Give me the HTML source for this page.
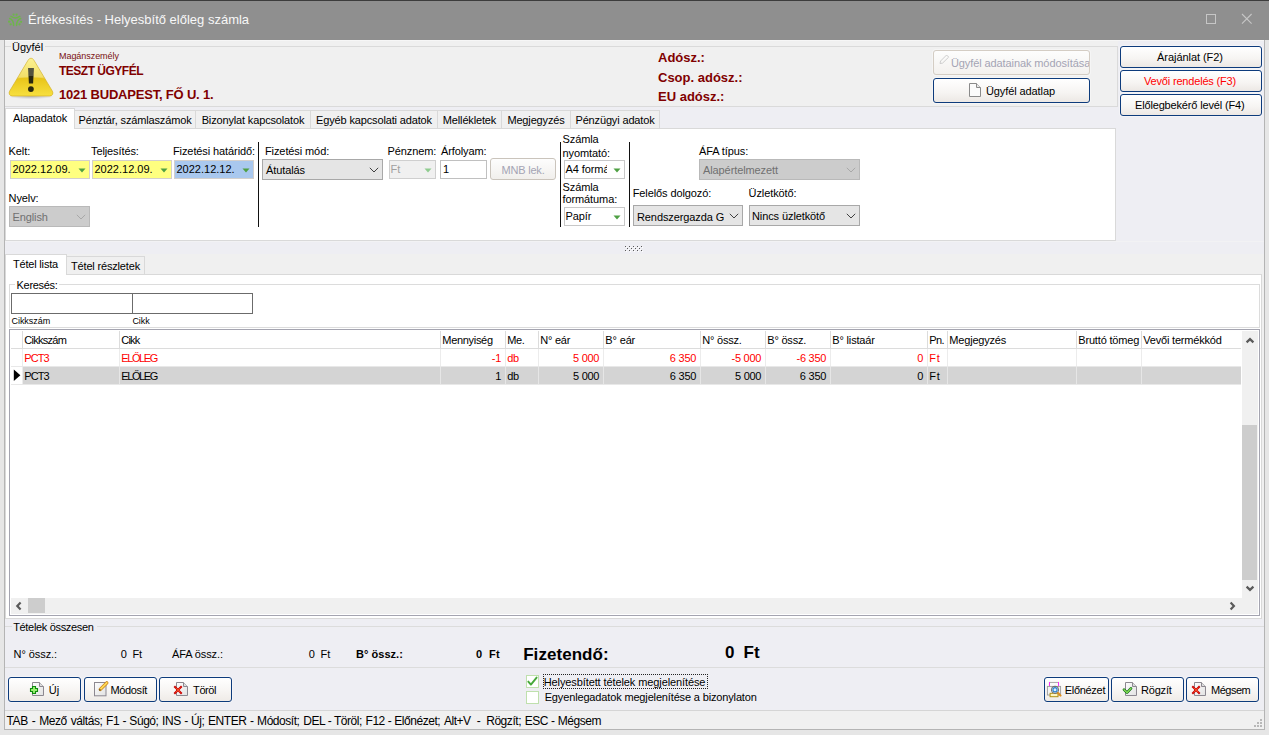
<!DOCTYPE html>
<html><head><meta charset="utf-8"><style>
html,body{margin:0;padding:0;width:1269px;height:735px;overflow:hidden;background:#e6e6e6}
.t{position:absolute;white-space:nowrap;line-height:1;font-family:'Liberation Sans', sans-serif}
.r{position:absolute;box-sizing:border-box}
svg{position:absolute}
</style></head><body>
<div class="r" style="left:0px;top:0px;width:1269px;height:735px;background:#e6e6e6"></div>
<div class="r" style="left:4px;top:40px;width:1261px;height:690px;background:#b4b4b4"></div>
<div class="r" style="left:5px;top:40px;width:1259px;height:689px;background:#f0f0f0"></div>
<div class="r" style="left:0px;top:0px;width:1269px;height:40px;background:#8f8f8f"></div>
<div class="r" style="left:0px;top:0px;width:1269px;height:1px;background:#3c3c3c"></div>
<svg style="left:0;top:0" width="30" height="40" viewBox="0 0 30 40">
<g fill="#6db649"><circle cx="13.6" cy="14.6" r="1.1"/><circle cx="16.6" cy="14.6" r="1.1"/>
<circle cx="9.1" cy="21.7" r="1.1"/><circle cx="10.6" cy="24.3" r="1.1"/><circle cx="21.1" cy="21.8" r="1.1"/><circle cx="19.5" cy="24.3" r="1.1"/></g>
<g fill="none" stroke="#6db649" stroke-width="1.45" stroke-linecap="round">
<path d="M11 16.3 Q15.2 19.6 19.8 16.3"/>
<path d="M9.6 18.5 Q13.6 19.8 13.6 25.4"/>
<path d="M20.8 18.5 Q16.6 19.8 16.6 25.4"/>
</g></svg>
<div class="t" style="left:28px;top:13px;font-size:13px;color:#f7f7f7;">Értékesítés - Helyesbítő előleg számla</div>
<div class="r" style="left:1206px;top:14px;width:10px;height:10px;border:1px solid #c6c6c6"></div>
<svg style="left:1240px;top:12px" width="14" height="14" viewBox="0 0 14 14"><path d="M2 2 L11.6 11.6 M11.6 2 L2 11.6" stroke="#c6c6c6" stroke-width="1.1"/></svg>
<div class="r" style="left:5px;top:40px;width:1259px;height:1px;background:#f6f6f6"></div>
<div class="r" style="left:1118px;top:41px;width:146px;height:87px;background:#eeeef3"></div>
<div class="r" style="left:5px;top:107px;width:1259px;height:147px;background:#eeeef3"></div>
<div class="r" style="left:5px;top:46px;width:1113px;height:61px;border:1px solid #dadada;border-left:none"></div>
<div class="r" style="left:11px;top:42px;width:34px;height:10px;background:#f0f0f0"></div>
<div class="t" style="left:12px;top:42px;font-size:11px;color:#000;">Ügyfél</div>
<svg style="left:6px;top:56px" width="50" height="45" viewBox="0 0 50 45">
<defs><linearGradient id="wg" x1="0" y1="0" x2="0" y2="1">
<stop offset="0" stop-color="#fbef7a"/><stop offset="0.5" stop-color="#f0d848"/><stop offset="0.52" stop-color="#e8c418"/><stop offset="1" stop-color="#f7e040"/></linearGradient>
<radialGradient id="ws" cx="0.5" cy="0.5" r="0.5"><stop offset="0" stop-color="#000" stop-opacity="0.22"/><stop offset="1" stop-color="#000" stop-opacity="0"/></radialGradient></defs>
<ellipse cx="25" cy="40.6" rx="23" ry="2.6" fill="url(#ws)"/>
<path d="M25 2.3 C26.4 2.3 27.2 3.1 28 4.4 L46.4 35.2 C47.5 37.2 46.6 40 43.8 40 L6.2 40 C3.4 40 2.5 37.2 3.6 35.2 L22 4.4 C22.8 3.1 23.6 2.3 25 2.3 Z" fill="url(#wg)" stroke="#d4b020" stroke-width="0.7"/>
<path d="M11.5 22.6 Q25 19.6 38.5 22.6 L28 4.4 C27.2 3.1 26.4 2.3 25 2.3 C23.6 2.3 22.8 3.1 22 4.4 Z" fill="#fff" opacity="0.18"/>
<path d="M22.1 12 L27.9 12 L27.1 27.6 L22.9 27.6 Z" fill="#2a2810"/>
<path d="M22.1 12 L27.9 12 L27.5 20 L22.5 20 Z" fill="#fff" opacity="0.2"/>
<circle cx="24.9" cy="33.1" r="2.9" fill="#2a2810"/>
</svg>
<div class="t" style="left:59px;top:52px;font-size:9px;color:#7a1010;letter-spacing:-0.05px;">Magánszemély</div>
<div class="t" style="left:59px;top:65px;font-size:12px;color:#800000;font-weight:bold;letter-spacing:-0.5px;">TESZT ÜGYFÉL</div>
<div class="t" style="left:59px;top:88px;font-size:13px;color:#800000;font-weight:bold;letter-spacing:-0.2px;">1021 BUDAPEST, FŐ U. 1.</div>
<div class="t" style="left:658px;top:51px;font-size:13px;color:#800000;font-weight:bold;">Adósz.:</div>
<div class="t" style="left:658px;top:71px;font-size:13px;color:#800000;font-weight:bold;">Csop. adósz.:</div>
<div class="t" style="left:658px;top:90px;font-size:13px;color:#800000;font-weight:bold;">EU adósz.:</div>
<div class="r" style="left:933px;top:50px;width:157px;height:25px;border:1px solid #d4cdc4;border-radius:3px;background:linear-gradient(#fdfdfd,#f3f1ee);box-shadow:0 0 0 1px rgba(255,255,255,0.35)"></div>
<svg style="left:937px;top:53px" width="14" height="14" viewBox="0 0 14 14">
<path d="M3 10.5 L3.6 8 L9.6 2 L11.7 4.1 L5.6 10.1 Z" fill="none" stroke="#c8c8c8" stroke-width="0.9"/></svg>
<div class="r" style="left:934px;top:51px;width:155px;height:23px;overflow:hidden">
<div class="t" style="left:17px;top:7px;font-size:11px;color:#a4a4b4;letter-spacing:-0.1px;">Ügyfél adatainak módosítása</div>
</div>
<div class="r" style="left:933px;top:78px;width:157px;height:25px;border:1px solid #0d3b7c;border-radius:3px;background:linear-gradient(#ffffff,#f6f4f2 60%,#ece8e4);box-shadow:0 0 0 1px rgba(255,255,255,0.35)"></div>
<svg style="left:968px;top:82px" width="14" height="16" viewBox="0 0 14 16">
<path d="M1.5 1.5 L8.5 1.5 L12.5 5.5 L12.5 14.5 L1.5 14.5 Z" fill="#fbfbfb" stroke="#8a8a8a" stroke-width="1"/>
<path d="M8.5 1.5 L8.5 5.5 L12.5 5.5" fill="#e8e8e8" stroke="#8a8a8a" stroke-width="1"/></svg>
<div class="t" style="left:986px;top:86px;font-size:11px;color:#000;letter-spacing:-0.1px;">Ügyfél adatlap</div>
<div class="r" style="left:1120px;top:46px;width:142px;height:22px;border:1px solid #0d3b7c;border-radius:3px;background:linear-gradient(#ffffff,#f6f4f2 60%,#ece8e4);box-shadow:0 0 0 1px rgba(255,255,255,0.35)"></div>
<div class="t" style="left:1119px;top:52px;font-size:11px;color:#000;letter-spacing:-0.05px;width:142px;text-align:center;">Árajánlat (F2)</div>
<div class="r" style="left:1120px;top:70px;width:142px;height:22px;border:1px solid #0d3b7c;border-radius:3px;background:linear-gradient(#ffffff,#f6f4f2 60%,#ece8e4);box-shadow:0 0 0 1px rgba(255,255,255,0.35)"></div>
<div class="t" style="left:1119px;top:76px;font-size:11px;color:#ff0000;letter-spacing:-0.18px;width:142px;text-align:center;">Vevői rendelés (F3)</div>
<div class="r" style="left:1120px;top:94px;width:142px;height:22px;border:1px solid #0d3b7c;border-radius:3px;background:linear-gradient(#ffffff,#f6f4f2 60%,#ece8e4);box-shadow:0 0 0 1px rgba(255,255,255,0.35)"></div>
<div class="t" style="left:1118.7px;top:100px;font-size:11px;color:#000;letter-spacing:-0.16px;width:142px;text-align:center;">Előlegbekérő levél (F4)</div>
<div class="r" style="left:74px;top:110px;width:122px;height:19px;background:#f0f0f0;border:1px solid #d9d9d9"></div>
<div class="t" style="left:74px;top:115px;font-size:11px;color:#000;letter-spacing:-0.15px;width:122px;text-align:center;">Pénztár, számlaszámok</div>
<div class="r" style="left:195px;top:110px;width:116px;height:19px;background:#f0f0f0;border:1px solid #d9d9d9"></div>
<div class="t" style="left:195px;top:115px;font-size:11px;color:#000;letter-spacing:-0.15px;width:116px;text-align:center;">Bizonylat kapcsolatok</div>
<div class="r" style="left:310px;top:110px;width:128px;height:19px;background:#f0f0f0;border:1px solid #d9d9d9"></div>
<div class="t" style="left:310px;top:115px;font-size:11px;color:#000;letter-spacing:-0.15px;width:128px;text-align:center;">Egyéb kapcsolati adatok</div>
<div class="r" style="left:437px;top:110px;width:65px;height:19px;background:#f0f0f0;border:1px solid #d9d9d9"></div>
<div class="t" style="left:437px;top:115px;font-size:11px;color:#000;letter-spacing:-0.15px;width:65px;text-align:center;">Mellékletek</div>
<div class="r" style="left:501px;top:110px;width:70px;height:19px;background:#f0f0f0;border:1px solid #d9d9d9"></div>
<div class="t" style="left:501px;top:115px;font-size:11px;color:#000;letter-spacing:-0.15px;width:70px;text-align:center;">Megjegyzés</div>
<div class="r" style="left:570px;top:110px;width:90px;height:19px;background:#f0f0f0;border:1px solid #d9d9d9"></div>
<div class="t" style="left:570px;top:115px;font-size:11px;color:#000;letter-spacing:-0.15px;width:90px;text-align:center;">Pénzügyi adatok</div>
<div class="r" style="left:5px;top:128px;width:1111px;height:113px;background:#fff;border:1px solid #d9d9d9"></div>
<div class="r" style="left:5px;top:108px;width:70px;height:21px;background:#fff;border:1px solid #d9d9d9;border-bottom:none"></div>
<div class="t" style="left:13px;top:113px;font-size:11px;color:#000;letter-spacing:-0.1px;">Alapadatok</div>
<div class="t" style="left:8.6px;top:146px;font-size:11px;color:#000;letter-spacing:-0.1px;">Kelt:</div>
<div class="t" style="left:91px;top:146px;font-size:11px;color:#000;letter-spacing:-0.1px;">Teljesítés:</div>
<div class="t" style="left:173px;top:146px;font-size:11px;color:#000;letter-spacing:-0.1px;">Fizetési határidő:</div>
<div class="t" style="left:265px;top:146px;font-size:11px;color:#000;letter-spacing:-0.1px;">Fizetési mód:</div>
<div class="t" style="left:387.6px;top:146px;font-size:11px;color:#000;letter-spacing:-0.1px;">Pénznem:</div>
<div class="t" style="left:441px;top:146px;font-size:11px;color:#000;letter-spacing:-0.1px;">Árfolyam:</div>
<div class="t" style="left:562.5px;top:134px;font-size:11px;color:#000;letter-spacing:-0.1px;">Számla</div>
<div class="t" style="left:562.5px;top:148px;font-size:11px;color:#000;letter-spacing:-0.1px;">nyomtató:</div>
<div class="t" style="left:699px;top:146px;font-size:11px;color:#000;letter-spacing:-0.1px;">ÁFA típus:</div>
<div class="t" style="left:8.6px;top:193px;font-size:11px;color:#000;letter-spacing:-0.1px;">Nyelv:</div>
<div class="t" style="left:562.5px;top:182px;font-size:11px;color:#000;letter-spacing:-0.1px;">Számla</div>
<div class="t" style="left:562.5px;top:194px;font-size:11px;color:#000;letter-spacing:-0.1px;">formátuma:</div>
<div class="t" style="left:632.7px;top:188px;font-size:11px;color:#000;letter-spacing:-0.1px;">Felelős dolgozó:</div>
<div class="t" style="left:748.6px;top:188px;font-size:11px;color:#000;letter-spacing:-0.1px;">Üzletkötő:</div>
<div class="r" style="left:10px;top:160px;width:80px;height:19px;background:#ffff80;border:1px solid #d4d0cc"></div>
<div class="t" style="left:12.5px;top:164px;font-size:11px;color:#000;letter-spacing:0px;">2022.12.09.</div>
<svg style="left:78px;top:168px" width="8" height="5" viewBox="0 0 8 5"><path d="M0.5 0.5 L7.5 0.5 L4 4.5 Z" fill="#4ea043"/></svg>
<div class="r" style="left:92px;top:160px;width:80px;height:19px;background:#ffff80;border:1px solid #d4d0cc"></div>
<div class="t" style="left:94.5px;top:164px;font-size:11px;color:#000;letter-spacing:0px;">2022.12.09.</div>
<svg style="left:160px;top:168px" width="8" height="5" viewBox="0 0 8 5"><path d="M0.5 0.5 L7.5 0.5 L4 4.5 Z" fill="#4ea043"/></svg>
<div class="r" style="left:174px;top:160px;width:80px;height:19px;background:#a9c8ee;border:1px solid #d4d0cc"></div>
<div class="t" style="left:176.5px;top:164px;font-size:11px;color:#000;letter-spacing:0px;">2022.12.12.</div>
<svg style="left:242px;top:168px" width="8" height="5" viewBox="0 0 8 5"><path d="M0.5 0.5 L7.5 0.5 L4 4.5 Z" fill="#4ea043"/></svg>
<div class="r" style="left:258px;top:142px;width:1px;height:85px;background:#111"></div>
<div class="r" style="left:560px;top:142px;width:1px;height:85px;background:#111"></div>
<div class="r" style="left:629px;top:142px;width:1px;height:85px;background:#111"></div>
<div class="r" style="left:9px;top:206px;width:81px;height:21px;background:#cccccc;border:1px solid #b9b9b9"></div>
<div class="t" style="left:12.5px;top:212px;font-size:11px;color:#707070;letter-spacing:-0.1px;">English</div>
<svg style="left:76px;top:214px" width="10" height="6" viewBox="0 0 10 6"><path d="M0.8 0.8 L5 5 L9.2 0.8" fill="none" stroke="#a8a8a8" stroke-width="1"/></svg>
<div class="r" style="left:262px;top:159px;width:121px;height:21px;background:#e5e5e5;border:1px solid #a8a8a8"></div>
<div class="t" style="left:266px;top:165px;font-size:11px;color:#000;letter-spacing:-0.1px;">Átutalás</div>
<svg style="left:369px;top:167px" width="10" height="6" viewBox="0 0 10 6"><path d="M0.8 0.8 L5 5 L9.2 0.8" fill="none" stroke="#404040" stroke-width="1"/></svg>
<div class="r" style="left:389px;top:160px;width:47px;height:19px;background:#f0f0f0;border:1px solid #cfcfcf"></div>
<div class="t" style="left:390.5px;top:164px;font-size:11px;color:#a0a0a0;">Ft</div>
<svg style="left:424px;top:168px" width="8" height="5" viewBox="0 0 8 5"><path d="M0.5 0.5 L7.5 0.5 L4 4.5 Z" fill="#8fcc8f"/></svg>
<div class="r" style="left:440px;top:160px;width:47px;height:19px;background:#fff;border:1px solid #c0c0c0"></div>
<div class="t" style="left:443px;top:164px;font-size:11px;color:#000;">1</div>
<div class="r" style="left:490px;top:158px;width:66px;height:22px;border:1px solid #cac4bc;border-radius:3px;background:linear-gradient(#fdfdfd,#f1efec)"></div>
<div class="t" style="left:490px;top:165px;font-size:11px;color:#a4a4b4;letter-spacing:-0.2px;width:66px;text-align:center;">MNB lek.</div>
<div class="r" style="left:564px;top:160px;width:61px;height:19px;background:#fff;border:1px solid #c8c8c8"></div>
<div class="r" style="left:565px;top:161px;width:42px;height:17px;overflow:hidden">
<div class="t" style="left:0.6px;top:3px;font-size:11px;color:#000;letter-spacing:-0.1px;">A4 formátum</div>
</div>
<svg style="left:613px;top:168px" width="8" height="5" viewBox="0 0 8 5"><path d="M0.5 0.5 L7.5 0.5 L4 4.5 Z" fill="#4ea043"/></svg>
<div class="r" style="left:564px;top:207px;width:61px;height:19px;background:#fff;border:1px solid #c8c8c8"></div>
<div class="r" style="left:565px;top:208px;width:42px;height:17px;overflow:hidden">
<div class="t" style="left:0.6px;top:3px;font-size:11px;color:#000;letter-spacing:-0.1px;">Papír</div>
</div>
<svg style="left:613px;top:215px" width="8" height="5" viewBox="0 0 8 5"><path d="M0.5 0.5 L7.5 0.5 L4 4.5 Z" fill="#4ea043"/></svg>
<div class="r" style="left:699px;top:159px;width:161px;height:21px;background:#cccccc;border:1px solid #b9b9b9"></div>
<div class="t" style="left:703px;top:165px;font-size:11px;color:#707070;letter-spacing:-0.1px;">Alapértelmezett</div>
<svg style="left:846px;top:167px" width="10" height="6" viewBox="0 0 10 6"><path d="M0.8 0.8 L5 5 L9.2 0.8" fill="none" stroke="#a8a8a8" stroke-width="1"/></svg>
<div class="r" style="left:633px;top:205px;width:110px;height:21px;background:#e5e5e5;border:1px solid #a8a8a8"></div>
<div class="r" style="left:634px;top:206px;width:90px;height:19px;overflow:hidden">
<div class="t" style="left:3px;top:6px;font-size:11px;color:#000;letter-spacing:-0.1px;">Rendszergazda Generál</div>
</div>
<svg style="left:729px;top:213px" width="10" height="6" viewBox="0 0 10 6"><path d="M0.8 0.8 L5 5 L9.2 0.8" fill="none" stroke="#404040" stroke-width="1"/></svg>
<div class="r" style="left:749px;top:205px;width:111px;height:21px;background:#e5e5e5;border:1px solid #a8a8a8"></div>
<div class="t" style="left:752px;top:211px;font-size:11px;color:#000;letter-spacing:-0.1px;">Nincs üzletkötő</div>
<svg style="left:846px;top:213px" width="10" height="6" viewBox="0 0 10 6"><path d="M0.8 0.8 L5 5 L9.2 0.8" fill="none" stroke="#404040" stroke-width="1"/></svg>
<div class="r" style="left:5px;top:241px;width:1259px;height:1px;background:#f2f2f4"></div>
<div class="r" style="left:626px;top:247px;width:1px;height:1px;background:#ffffff"></div>
<div class="r" style="left:625px;top:246px;width:1px;height:1px;background:#5a5a5a"></div>
<div class="r" style="left:630px;top:247px;width:1px;height:1px;background:#ffffff"></div>
<div class="r" style="left:629px;top:246px;width:1px;height:1px;background:#5a5a5a"></div>
<div class="r" style="left:634px;top:247px;width:1px;height:1px;background:#ffffff"></div>
<div class="r" style="left:633px;top:246px;width:1px;height:1px;background:#5a5a5a"></div>
<div class="r" style="left:638px;top:247px;width:1px;height:1px;background:#ffffff"></div>
<div class="r" style="left:637px;top:246px;width:1px;height:1px;background:#5a5a5a"></div>
<div class="r" style="left:642px;top:247px;width:1px;height:1px;background:#ffffff"></div>
<div class="r" style="left:641px;top:246px;width:1px;height:1px;background:#5a5a5a"></div>
<div class="r" style="left:628px;top:249px;width:1px;height:1px;background:#ffffff"></div>
<div class="r" style="left:627px;top:248px;width:1px;height:1px;background:#5a5a5a"></div>
<div class="r" style="left:632px;top:249px;width:1px;height:1px;background:#ffffff"></div>
<div class="r" style="left:631px;top:248px;width:1px;height:1px;background:#5a5a5a"></div>
<div class="r" style="left:636px;top:249px;width:1px;height:1px;background:#ffffff"></div>
<div class="r" style="left:635px;top:248px;width:1px;height:1px;background:#5a5a5a"></div>
<div class="r" style="left:640px;top:249px;width:1px;height:1px;background:#ffffff"></div>
<div class="r" style="left:639px;top:248px;width:1px;height:1px;background:#5a5a5a"></div>
<div class="r" style="left:626px;top:251px;width:1px;height:1px;background:#ffffff"></div>
<div class="r" style="left:625px;top:250px;width:1px;height:1px;background:#5a5a5a"></div>
<div class="r" style="left:630px;top:251px;width:1px;height:1px;background:#ffffff"></div>
<div class="r" style="left:629px;top:250px;width:1px;height:1px;background:#5a5a5a"></div>
<div class="r" style="left:634px;top:251px;width:1px;height:1px;background:#ffffff"></div>
<div class="r" style="left:633px;top:250px;width:1px;height:1px;background:#5a5a5a"></div>
<div class="r" style="left:638px;top:251px;width:1px;height:1px;background:#ffffff"></div>
<div class="r" style="left:637px;top:250px;width:1px;height:1px;background:#5a5a5a"></div>
<div class="r" style="left:642px;top:251px;width:1px;height:1px;background:#ffffff"></div>
<div class="r" style="left:641px;top:250px;width:1px;height:1px;background:#5a5a5a"></div>
<div class="r" style="left:5px;top:254px;width:1259px;height:365px;background:#f0f0f0"></div>
<div class="r" style="left:66px;top:256px;width:79px;height:19px;background:#f0f0f0;border:1px solid #d9d9d9"></div>
<div class="t" style="left:71px;top:261px;font-size:11px;color:#000;letter-spacing:-0.17px;">Tétel részletek</div>
<div class="r" style="left:5px;top:274px;width:1257px;height:345px;background:#fff;border:1px solid #d9d9d9"></div>
<div class="r" style="left:5px;top:254px;width:62px;height:21px;background:#fff;border:1px solid #d9d9d9;border-bottom:none"></div>
<div class="t" style="left:13px;top:259px;font-size:11px;color:#000;letter-spacing:-0.19px;">Tétel lista</div>
<div class="r" style="left:9px;top:284px;width:1251px;height:44px;border:1px solid #dcdcdc"></div>
<div class="r" style="left:15px;top:280px;width:44px;height:9px;background:#fff"></div>
<div class="t" style="left:16.6px;top:280px;font-size:11px;color:#000;letter-spacing:-0.33px;">Keresés:</div>
<div class="r" style="left:11px;top:293px;width:122px;height:21px;border:1px solid #6b6b6b;background:#fff"></div>
<div class="r" style="left:132px;top:293px;width:121px;height:21px;border:1px solid #6b6b6b;background:#fff"></div>
<div class="t" style="left:11.5px;top:317px;font-size:9px;color:#000;letter-spacing:-0.05px;">Cikkszám</div>
<div class="t" style="left:132.4px;top:317px;font-size:9px;color:#000;letter-spacing:-0.05px;">Cikk</div>
<div class="r" style="left:9px;top:329px;width:1251px;height:287px;border:1px solid #a4a4b0;background:#fff"></div>
<div class="r" style="left:11px;top:348px;width:1230px;height:1px;background:#dcdcdc"></div>
<div class="r" style="left:22px;top:367px;width:1219px;height:17px;background:#d4d4d4"></div>
<div class="r" style="left:11px;top:366px;width:1230px;height:1px;background:#e8e8e8"></div>
<div class="r" style="left:11px;top:384px;width:1230px;height:1px;background:#e8e8e8"></div>
<div class="r" style="left:22px;top:331px;width:1px;height:17px;background:#dcdcdc"></div>
<div class="r" style="left:22px;top:349px;width:1px;height:17px;background:#ececec"></div>
<div class="r" style="left:22px;top:367px;width:1px;height:17px;background:#ececec"></div>
<div class="r" style="left:119px;top:331px;width:1px;height:17px;background:#dcdcdc"></div>
<div class="r" style="left:119px;top:349px;width:1px;height:17px;background:#ececec"></div>
<div class="r" style="left:119px;top:367px;width:1px;height:17px;background:#e6e6e6"></div>
<div class="r" style="left:440px;top:331px;width:1px;height:17px;background:#dcdcdc"></div>
<div class="r" style="left:440px;top:349px;width:1px;height:17px;background:#ececec"></div>
<div class="r" style="left:440px;top:367px;width:1px;height:17px;background:#e6e6e6"></div>
<div class="r" style="left:505px;top:331px;width:1px;height:17px;background:#dcdcdc"></div>
<div class="r" style="left:505px;top:349px;width:1px;height:17px;background:#ececec"></div>
<div class="r" style="left:505px;top:367px;width:1px;height:17px;background:#e6e6e6"></div>
<div class="r" style="left:538px;top:331px;width:1px;height:17px;background:#dcdcdc"></div>
<div class="r" style="left:538px;top:349px;width:1px;height:17px;background:#ececec"></div>
<div class="r" style="left:538px;top:367px;width:1px;height:17px;background:#e6e6e6"></div>
<div class="r" style="left:603px;top:331px;width:1px;height:17px;background:#dcdcdc"></div>
<div class="r" style="left:603px;top:349px;width:1px;height:17px;background:#ececec"></div>
<div class="r" style="left:603px;top:367px;width:1px;height:17px;background:#e6e6e6"></div>
<div class="r" style="left:700px;top:331px;width:1px;height:17px;background:#dcdcdc"></div>
<div class="r" style="left:700px;top:349px;width:1px;height:17px;background:#ececec"></div>
<div class="r" style="left:700px;top:367px;width:1px;height:17px;background:#e6e6e6"></div>
<div class="r" style="left:765px;top:331px;width:1px;height:17px;background:#dcdcdc"></div>
<div class="r" style="left:765px;top:349px;width:1px;height:17px;background:#ececec"></div>
<div class="r" style="left:765px;top:367px;width:1px;height:17px;background:#e6e6e6"></div>
<div class="r" style="left:830px;top:331px;width:1px;height:17px;background:#dcdcdc"></div>
<div class="r" style="left:830px;top:349px;width:1px;height:17px;background:#ececec"></div>
<div class="r" style="left:830px;top:367px;width:1px;height:17px;background:#e6e6e6"></div>
<div class="r" style="left:927px;top:331px;width:1px;height:17px;background:#dcdcdc"></div>
<div class="r" style="left:927px;top:349px;width:1px;height:17px;background:#ececec"></div>
<div class="r" style="left:927px;top:367px;width:1px;height:17px;background:#e6e6e6"></div>
<div class="r" style="left:947px;top:331px;width:1px;height:17px;background:#dcdcdc"></div>
<div class="r" style="left:947px;top:349px;width:1px;height:17px;background:#ececec"></div>
<div class="r" style="left:947px;top:367px;width:1px;height:17px;background:#e6e6e6"></div>
<div class="r" style="left:1076px;top:331px;width:1px;height:17px;background:#dcdcdc"></div>
<div class="r" style="left:1076px;top:349px;width:1px;height:17px;background:#ececec"></div>
<div class="r" style="left:1076px;top:367px;width:1px;height:17px;background:#e6e6e6"></div>
<div class="r" style="left:1141px;top:331px;width:1px;height:17px;background:#dcdcdc"></div>
<div class="r" style="left:1141px;top:349px;width:1px;height:17px;background:#ececec"></div>
<div class="r" style="left:1141px;top:367px;width:1px;height:17px;background:#e6e6e6"></div>
<div class="t" style="left:24.3px;top:335px;font-size:11px;color:#000;letter-spacing:-0.729px;">Cikkszám</div>
<div class="t" style="left:121.3px;top:335px;font-size:11px;color:#000;letter-spacing:-0.833px;">Cikk</div>
<div class="t" style="left:442.3px;top:335px;font-size:11px;color:#000;letter-spacing:-0.312px;">Mennyiség</div>
<div class="t" style="left:507.3px;top:335px;font-size:11px;color:#000;letter-spacing:-0.45px;">Me.</div>
<div class="t" style="left:540.3px;top:335px;font-size:11px;color:#000;letter-spacing:-0.26px;">N° eár</div>
<div class="t" style="left:605.3px;top:335px;font-size:11px;color:#000;letter-spacing:-0.14px;">B° eár</div>
<div class="t" style="left:702.3px;top:335px;font-size:11px;color:#000;letter-spacing:-0.229px;">N° össz.</div>
<div class="t" style="left:767.3px;top:335px;font-size:11px;color:#000;letter-spacing:-0.214px;">B° össz.</div>
<div class="t" style="left:832.3px;top:335px;font-size:11px;color:#000;letter-spacing:-0.167px;">B° listaár</div>
<div class="t" style="left:929.3px;top:335px;font-size:11px;color:#000;letter-spacing:-0.65px;">Pn.</div>
<div class="t" style="left:949.3px;top:335px;font-size:11px;color:#000;letter-spacing:-0.189px;">Megjegyzés</div>
<div class="r" style="left:1077px;top:331px;width:64px;height:17px;overflow:hidden">
<div class="t" style="left:1.3px;top:4px;font-size:11px;color:#000;letter-spacing:-0.18px;">Bruttó tömeg</div>
</div>
<div class="t" style="left:1143.3px;top:335px;font-size:11px;color:#000;letter-spacing:-0.2px;">Vevői termékkód</div>
<div class="t" style="left:24.3px;top:353px;font-size:11px;color:#ff0000;letter-spacing:-0.9px;">PCT3</div>
<div class="t" style="left:121.3px;top:353px;font-size:11px;color:#ff0000;letter-spacing:-1.4px;">ELŐLEG</div>
<div class="t" style="left:421.4px;width:80px;text-align:right;top:353px;font-size:11px;color:#ff0000;letter-spacing:-0.1px;">-1</div>
<div class="t" style="left:507.3px;top:353px;font-size:11px;color:#ff0000;letter-spacing:-0.4px;">db</div>
<div class="t" style="left:519.225px;width:80px;text-align:right;top:353px;font-size:11px;color:#ff0000;letter-spacing:-0.275px;">5 000</div>
<div class="t" style="left:616.325px;width:80px;text-align:right;top:353px;font-size:11px;color:#ff0000;letter-spacing:-0.175px;">6 350</div>
<div class="t" style="left:681.26px;width:80px;text-align:right;top:353px;font-size:11px;color:#ff0000;letter-spacing:-0.24px;">-5 000</div>
<div class="t" style="left:746.26px;width:80px;text-align:right;top:353px;font-size:11px;color:#ff0000;letter-spacing:-0.24px;">-6 350</div>
<div class="t" style="left:843.4px;width:80px;text-align:right;top:353px;font-size:11px;color:#ff0000;letter-spacing:-0.1px;">0</div>
<div class="t" style="left:929.3px;top:353px;font-size:11px;color:#ff0000;letter-spacing:0.7px;">Ft</div>
<div class="t" style="left:24.3px;top:371px;font-size:11px;color:#000000;letter-spacing:-0.9px;">PCT3</div>
<div class="t" style="left:121.3px;top:371px;font-size:11px;color:#000000;letter-spacing:-1.4px;">ELŐLEG</div>
<div class="t" style="left:421.4px;width:80px;text-align:right;top:371px;font-size:11px;color:#000000;letter-spacing:-0.1px;">1</div>
<div class="t" style="left:507.3px;top:371px;font-size:11px;color:#000000;letter-spacing:-0.4px;">db</div>
<div class="t" style="left:519.225px;width:80px;text-align:right;top:371px;font-size:11px;color:#000000;letter-spacing:-0.275px;">5 000</div>
<div class="t" style="left:616.325px;width:80px;text-align:right;top:371px;font-size:11px;color:#000000;letter-spacing:-0.175px;">6 350</div>
<div class="t" style="left:681.225px;width:80px;text-align:right;top:371px;font-size:11px;color:#000000;letter-spacing:-0.275px;">5 000</div>
<div class="t" style="left:746.325px;width:80px;text-align:right;top:371px;font-size:11px;color:#000000;letter-spacing:-0.175px;">6 350</div>
<div class="t" style="left:843.4px;width:80px;text-align:right;top:371px;font-size:11px;color:#000000;letter-spacing:-0.1px;">0</div>
<div class="t" style="left:929.3px;top:371px;font-size:11px;color:#000000;letter-spacing:0.7px;">Ft</div>
<svg style="left:13px;top:369px" width="9" height="13" viewBox="0 0 9 13"><path d="M0.8 0.6 L7.4 6.3 L0.8 12 Z" fill="#000"/></svg>
<div class="r" style="left:1242px;top:331px;width:16px;height:267px;background:#f0f0f0"></div>
<div class="r" style="left:1242px;top:425px;width:15px;height:155px;background:#cdcdcd"></div>
<svg style="left:1245px;top:337px" width="10" height="7" viewBox="0 0 10 7"><path d="M1.6 5.4 L5 2.1 L8.4 5.4" fill="none" stroke="#5a5a5a" stroke-width="2.2"/></svg>
<svg style="left:1245px;top:585px" width="10" height="7" viewBox="0 0 10 7"><path d="M1.6 1.6 L5 4.9 L8.4 1.6" fill="none" stroke="#5a5a5a" stroke-width="2.2"/></svg>
<div class="r" style="left:11px;top:598px;width:1247px;height:16px;background:#f0f0f0"></div>
<div class="r" style="left:28px;top:598px;width:17px;height:15px;background:#cdcdcd"></div>
<svg style="left:15px;top:601px" width="7" height="10" viewBox="0 0 7 10"><path d="M5.6 1.6 L2.3 5 L5.6 8.4" fill="none" stroke="#5a5a5a" stroke-width="2.2"/></svg>
<svg style="left:1229px;top:601px" width="7" height="10" viewBox="0 0 7 10"><path d="M1.6 1.6 L4.9 5 L1.6 8.4" fill="none" stroke="#5a5a5a" stroke-width="2.2"/></svg>
<div class="r" style="left:5px;top:619px;width:1259px;height:91px;background:#eeeef3"></div>
<div class="r" style="left:5px;top:626px;width:1259px;height:1px;background:#dcdcdc"></div>
<div class="r" style="left:12px;top:622px;width:85px;height:9px;background:#eeeef3"></div>
<div class="t" style="left:13.2px;top:622px;font-size:11px;color:#000;letter-spacing:-0.327px;">Tételek összesen</div>
<div class="t" style="left:13.6px;top:649px;font-size:11px;color:#000;letter-spacing:-0.08px;">N° össz.:</div>
<div class="t" style="left:120.8px;top:649px;font-size:11px;color:#000;">0</div>
<div class="t" style="left:132.4px;top:649px;font-size:11px;color:#000;letter-spacing:-0.1px;">Ft</div>
<div class="t" style="left:171.9px;top:649px;font-size:11px;color:#000;letter-spacing:-0.09px;">ÁFA össz.:</div>
<div class="t" style="left:308.8px;top:649px;font-size:11px;color:#000;">0</div>
<div class="t" style="left:320.6px;top:649px;font-size:11px;color:#000;letter-spacing:-0.1px;">Ft</div>
<div class="t" style="left:355.9px;top:649px;font-size:11px;color:#000;font-weight:bold;letter-spacing:0.05px;">B° össz.:</div>
<div class="t" style="left:475.9px;top:649px;font-size:11px;color:#000;font-weight:bold;">0</div>
<div class="t" style="left:488.9px;top:649px;font-size:11px;color:#000;font-weight:bold;letter-spacing:0.3px;">Ft</div>
<div class="t" style="left:523.2px;top:646px;font-size:17px;color:#000;font-weight:bold;letter-spacing:0.05px;">Fizetendő:</div>
<div class="t" style="left:725px;top:644px;font-size:17px;color:#000;font-weight:bold;">0</div>
<div class="t" style="left:743.5px;top:644px;font-size:17px;color:#000;font-weight:bold;">Ft</div>
<div class="r" style="left:5px;top:667px;width:1259px;height:1px;background:#dcdcdc"></div>
<div class="r" style="left:8px;top:677px;width:73px;height:25px;border:1.3px solid #0d3b7c;border-radius:3px;background:linear-gradient(#ffffff,#f7f5f3 55%,#efebe7);box-shadow:0 0 0 1px rgba(255,255,255,0.35)"></div>
<svg style="left:31px;top:681px" width="14" height="16" viewBox="0 0 14 16">
<defs><linearGradient id="dg31" x1="0" y1="0" x2="1" y2="1"><stop offset="0" stop-color="#fdfdfd"/><stop offset="1" stop-color="#e2e2e2"/></linearGradient></defs>
<path d="M1.5 1.5 L8.5 1.5 L12.5 5.5 L12.5 14.5 L1.5 14.5 Z" fill="url(#dg31)" stroke="#8c8890" stroke-width="1"/>
<path d="M8.5 1.5 L8.5 5.5 L12.5 5.5" fill="#dedede" stroke="#8c8890" stroke-width="1"/></svg>
<svg style="left:29px;top:685px" width="10" height="10" viewBox="0 0 10 10"><path d="M3.5 1.5 H6.5 V3.5 H8.5 V6.5 H6.5 V8.5 H3.5 V6.5 H1.5 V3.5 H3.5 Z" fill="#9af070" stroke="#0e8a0e" stroke-width="1.1"/></svg>
<div class="t" style="left:48.8px;top:685px;font-size:11px;color:#000;">Új</div>
<div class="r" style="left:84px;top:677px;width:73px;height:25px;border:1.3px solid #0d3b7c;border-radius:3px;background:linear-gradient(#ffffff,#f7f5f3 55%,#efebe7);box-shadow:0 0 0 1px rgba(255,255,255,0.35)"></div>
<svg style="left:93px;top:681px" width="14" height="16" viewBox="0 0 14 16"><defs><linearGradient id="mdg" x1="0" y1="0" x2="1" y2="1"><stop offset="0" stop-color="#fdfdfd"/><stop offset="1" stop-color="#e2e2e2"/></linearGradient></defs><rect x="1.5" y="1.5" width="11.5" height="13.3" fill="url(#mdg)" stroke="#8c8890" stroke-width="1"/></svg>
<svg style="left:96px;top:680px" width="14" height="14" viewBox="0 0 14 14"><path d="M4.3 9.4 L10.8 2.9" stroke="#d08a20" stroke-width="3.4" stroke-linecap="round"/><path d="M4.3 9.4 L10.8 2.9" stroke="#ffdc58" stroke-width="1.6" stroke-linecap="round"/><circle cx="3.9" cy="9.9" r="0.8" fill="#5a4a20"/></svg>
<div class="t" style="left:110.6px;top:685px;font-size:11px;color:#000;letter-spacing:-0.39px;">Módosít</div>
<div class="r" style="left:159px;top:677px;width:73px;height:25px;border:1.3px solid #0d3b7c;border-radius:3px;background:linear-gradient(#ffffff,#f7f5f3 55%,#efebe7);box-shadow:0 0 0 1px rgba(255,255,255,0.35)"></div>
<svg style="left:175px;top:681px" width="14" height="16" viewBox="0 0 14 16">
<defs><linearGradient id="dg175" x1="0" y1="0" x2="1" y2="1"><stop offset="0" stop-color="#fdfdfd"/><stop offset="1" stop-color="#e2e2e2"/></linearGradient></defs>
<path d="M1.5 1.5 L8.5 1.5 L12.5 5.5 L12.5 14.5 L1.5 14.5 Z" fill="url(#dg175)" stroke="#8c8890" stroke-width="1"/>
<path d="M8.5 1.5 L8.5 5.5 L12.5 5.5" fill="#dedede" stroke="#8c8890" stroke-width="1"/></svg>
<svg style="left:173px;top:685px" width="10" height="10" viewBox="0 0 10 10"><path d="M2 2 L8 8 M8 2 L2 8" stroke="#c80000" stroke-width="2.0" stroke-linecap="square"/><path d="M2.6 2.6 L7.4 7.4 M7.4 2.6 L2.6 7.4" stroke="#ff5020" stroke-width="0.9"/></svg>
<div class="t" style="left:193.1px;top:685px;font-size:11px;color:#000;letter-spacing:-0.41px;">Töröl</div>
<div class="r" style="left:526px;top:675px;width:13px;height:13px;border:1px solid #bfe0ad;background:#fff"></div>
<svg style="left:526px;top:675px" width="13" height="13" viewBox="0 0 13 13"><path d="M2.3 6.6 L4.9 9.6 L10.6 2.6" fill="none" stroke="#46a83a" stroke-width="1.9" stroke-linecap="round" stroke-linejoin="round"/></svg>
<div class="r" style="left:543px;top:674px;width:165px;height:15px;border:1px dotted #222"></div>
<div class="t" style="left:543.7px;top:677px;font-size:11px;color:#000;letter-spacing:-0.1px;">Helyesbített tételek megjelenítése</div>
<div class="r" style="left:526px;top:691px;width:13px;height:13px;border:1px solid #bfe0ad;background:#fff"></div>
<div class="t" style="left:544.7px;top:692px;font-size:11px;color:#000;letter-spacing:-0.15px;">Egyenlegadatok megjelenítése a bizonylaton</div>
<div class="r" style="left:1044px;top:677px;width:65px;height:25px;border:1.3px solid #0d3b7c;border-radius:3px;background:linear-gradient(#ffffff,#f7f5f3 55%,#efebe7);box-shadow:0 0 0 1px rgba(255,255,255,0.35)"></div>
<svg style="left:1046px;top:681px" width="18" height="18" viewBox="0 0 18 18">
<rect x="3.4" y="1.4" width="9.2" height="4.4" fill="#fafafa" stroke="#a0a0a0" stroke-width="0.9"/>
<rect x="1.4" y="5.4" width="13.2" height="8.6" fill="#f4f4f4" stroke="#9a9a9a" stroke-width="0.9"/>
<rect x="4.1" y="12.3" width="7.9" height="3.4" fill="#fff6c0" stroke="#b09010" stroke-width="1"/>
<path d="M3.5 1 V5 M12.5 1 V5" stroke="#ff20ff" stroke-width="0.9"/>
<circle cx="9" cy="8.8" r="3.6" fill="#fff" stroke="#505050" stroke-width="0.9"/>
<circle cx="9" cy="8.8" r="2.1" fill="#d8f0ff" stroke="#2a80d0" stroke-width="1.2"/>
<path d="M12.2 12 L14.6 14.6" stroke="#e09020" stroke-width="2" stroke-linecap="round"/></svg>
<div class="t" style="left:1064.7px;top:685px;font-size:11px;color:#000;letter-spacing:-0.29px;">Előnézet</div>
<div class="r" style="left:1111px;top:677px;width:73px;height:25px;border:1.3px solid #0d3b7c;border-radius:3px;background:linear-gradient(#ffffff,#f7f5f3 55%,#efebe7);box-shadow:0 0 0 1px rgba(255,255,255,0.35)"></div>
<svg style="left:1124px;top:681px" width="14" height="16" viewBox="0 0 14 16">
<defs><linearGradient id="dg1124" x1="0" y1="0" x2="1" y2="1"><stop offset="0" stop-color="#fdfdfd"/><stop offset="1" stop-color="#e2e2e2"/></linearGradient></defs>
<path d="M1.5 1.5 L8.5 1.5 L12.5 5.5 L12.5 14.5 L1.5 14.5 Z" fill="url(#dg1124)" stroke="#8c8890" stroke-width="1"/>
<path d="M8.5 1.5 L8.5 5.5 L12.5 5.5" fill="#dedede" stroke="#8c8890" stroke-width="1"/></svg>
<svg style="left:1122px;top:686px" width="11" height="9" viewBox="0 0 11 9"><path d="M2 3.6 L5 6.6 L9 2.4" fill="none" stroke="#127012" stroke-width="2.7" stroke-linecap="round" stroke-linejoin="round"/><path d="M2 3.6 L5 6.6 L9 2.4" fill="none" stroke="#98f060" stroke-width="1.1" stroke-linecap="round" stroke-linejoin="round"/></svg>
<div class="t" style="left:1141px;top:685px;font-size:11px;color:#000;letter-spacing:-0.2px;">Rögzít</div>
<div class="r" style="left:1186px;top:677px;width:73px;height:25px;border:1.3px solid #0d3b7c;border-radius:3px;background:linear-gradient(#ffffff,#f7f5f3 55%,#efebe7);box-shadow:0 0 0 1px rgba(255,255,255,0.35)"></div>
<svg style="left:1193px;top:681px" width="14" height="16" viewBox="0 0 14 16">
<defs><linearGradient id="dg1193" x1="0" y1="0" x2="1" y2="1"><stop offset="0" stop-color="#fdfdfd"/><stop offset="1" stop-color="#e2e2e2"/></linearGradient></defs>
<path d="M1.5 1.5 L8.5 1.5 L12.5 5.5 L12.5 14.5 L1.5 14.5 Z" fill="url(#dg1193)" stroke="#8c8890" stroke-width="1"/>
<path d="M8.5 1.5 L8.5 5.5 L12.5 5.5" fill="#dedede" stroke="#8c8890" stroke-width="1"/></svg>
<svg style="left:1191px;top:685px" width="10" height="10" viewBox="0 0 10 10"><path d="M2 2 L8 8 M8 2 L2 8" stroke="#c80000" stroke-width="2.0" stroke-linecap="square"/><path d="M2.6 2.6 L7.4 7.4 M7.4 2.6 L2.6 7.4" stroke="#ff5020" stroke-width="0.9"/></svg>
<div class="t" style="left:1211px;top:685px;font-size:11px;color:#000;letter-spacing:-0.5px;">Mégsem</div>
<div class="r" style="left:5px;top:710px;width:1259px;height:1px;background:#d5d5d5"></div>
<div class="r" style="left:5px;top:711px;width:1259px;height:18px;background:#f0f0f0"></div>
<div class="t" style="left:6.6px;top:715px;font-size:12px;color:#000;letter-spacing:-0.45px;word-spacing:1.117px;">TAB - Mező váltás;</div>
<div class="t" style="left:106.0px;top:715px;font-size:12px;color:#000;letter-spacing:-0.45px;word-spacing:0.475px;">F1 - Súgó;</div>
<div class="t" style="left:162.1px;top:715px;font-size:12px;color:#000;letter-spacing:-0.45px;word-spacing:0.5px;">INS - Új;</div>
<div class="t" style="left:208.0px;top:715px;font-size:12px;color:#000;letter-spacing:-0.45px;word-spacing:0.675px;">ENTER - Módosít;</div>
<div class="t" style="left:303.20000000000005px;top:715px;font-size:12px;color:#000;letter-spacing:-0.45px;word-spacing:0.025px;">DEL - Töröl;</div>
<div class="t" style="left:365.5px;top:715px;font-size:12px;color:#000;letter-spacing:-0.45px;word-spacing:0.05px;">F12 - Előnézet;</div>
<div class="t" style="left:443.90000000000003px;top:715px;font-size:12px;color:#000;letter-spacing:-0.45px;word-spacing:3.1px;">Alt+V - Rögzít;</div>
<div class="t" style="left:524.7px;top:715px;font-size:12px;color:#000;letter-spacing:-0.45px;word-spacing:0.225px;">ESC - Mégsem</div>
<svg style="left:1251px;top:718px" width="13" height="12" viewBox="0 0 13 12"><g fill="#b8b8b8"><rect x="9" y="1" width="2" height="2"/><rect x="6" y="4" width="2" height="2"/><rect x="9" y="4" width="2" height="2"/><rect x="3" y="7" width="2" height="2"/><rect x="6" y="7" width="2" height="2"/><rect x="9" y="7" width="2" height="2"/></g></svg>
</body></html>
